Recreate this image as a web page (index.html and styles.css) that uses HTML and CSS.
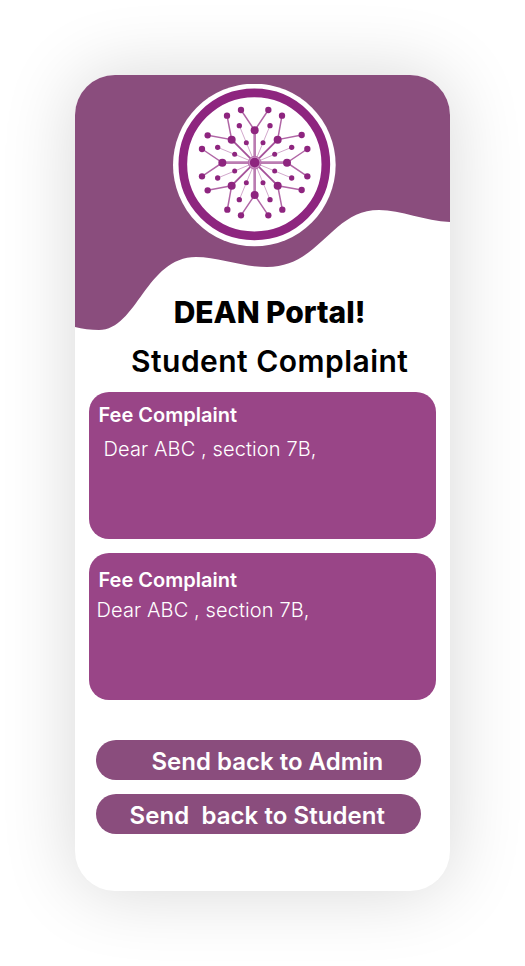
FILE: index.html
```html
<!DOCTYPE html>
<html lang="en">
<head>
<meta charset="utf-8">
<title>DEAN Portal</title>
<link rel="stylesheet" href="styles.css">
</head>
<body>
<main class="phone">
  <svg class="wave" viewBox="0 0 375 256" aria-hidden="true">
    <path d="M0 0H375V147C350 146 326 135 304 135C256 135 245 192 192 192C167 192 144 182 121 182C71 182 62 255 24 255C16 255 7 254 0 252Z"/>
  </svg>
  <header class="header">
    <svg class="logo" viewBox="24 27 489 489" role="img" aria-label="Logo">
      <defs>
        <g id="spoke">
          <path class="stem" d="M269 263V166"/>
          <path class="twig" d="M228 105L269 166L310 105"/>
          <circle cx="269" cy="166" r="12"/>
          <circle cx="228" cy="105" r="9.5"/>
          <circle cx="310" cy="105" r="9.5"/>
        </g>
        <g id="corner">
          <path class="branch" d="M269 263L338 194"/>
          <path class="twig" d="M351 122L338 194L410 180"/>
          <path class="fine" d="M269 263L294 203L315 152M269 263L329 238L380 217"/>
          <circle cx="338" cy="194" r="12"/>
          <circle cx="351" cy="122" r="9.5"/>
          <circle cx="410" cy="180" r="9.5"/>
          <circle cx="294" cy="203" r="7.5"/>
          <circle cx="315" cy="152" r="8"/>
          <circle cx="329" cy="238" r="7.5"/>
          <circle cx="380" cy="217" r="8"/>
        </g>
      </defs>
      <circle class="disc" cx="268" cy="270" r="244"/>
      <circle class="ring" cx="268" cy="268" r="214.5"/>
      <use href="#spoke"/>
      <use href="#spoke" transform="rotate(90 269 263)"/>
      <use href="#spoke" transform="rotate(180 269 263)"/>
      <use href="#spoke" transform="rotate(270 269 263)"/>
      <use href="#corner"/>
      <use href="#corner" transform="rotate(90 269 263)"/>
      <use href="#corner" transform="rotate(180 269 263)"/>
      <use href="#corner" transform="rotate(270 269 263)"/>
      <circle class="halo" cx="269" cy="263" r="19"/>
      <circle cx="269" cy="263" r="14.5"/>
    </svg>
    <h1 class="title">DEAN Portal!</h1>
    <h2 class="subtitle">Student Complaint</h2>
  </header>
  <section class="complaints">
    <article class="card">
      <h3 class="card-title">Fee Complaint</h3>
      <p class="card-text">Dear ABC , section 7B,</p>
    </article>
    <article class="card card-second">
      <h3 class="card-title">Fee Complaint</h3>
      <p class="card-text">Dear ABC , section 7B,</p>
    </article>
  </section>
  <div class="actions">
    <button class="button button-admin">Send back to Admin</button>
    <button class="button button-student">Send&nbsp; back to Student</button>
  </div>
</main>
</body>
</html>
```
FILE: styles.css
```css
* { box-sizing: border-box; }
body {
  margin: 0;
  height: 966px;
  padding: 75px;
  background: #fff;
  font-family: Inter, sans-serif;
  overflow: hidden;
}
.phone {
  position: relative;
  width: 375px;
  height: 816px;
  border-radius: 40px;
  background: #fff;
  box-shadow: 0 0 75px rgba(0, 0, 0, .16);
}
.wave {
  position: absolute;
  top: 0;
  left: 0;
  width: 375px;
  height: 256px;
  border-radius: 40px 40px 0 0;
  fill: #8a4d7d;
}
.header {
  position: relative;
  height: 317px;
  padding-top: 9px;
}
.logo {
  display: block;
  width: 163px;
  height: 163px;
  margin-left: 98px;
  fill: #8e257f;
}
.disc { fill: #fff; }
.ring { fill: none; stroke: #8e257f; stroke-width: 26; }
.stem, .branch, .twig, .fine { fill: none; stroke: #8e257f; }
.stem { stroke-width: 8; opacity: .6; }
.branch { stroke-width: 5.5; opacity: .8; }
.twig { stroke-width: 4.5; opacity: .7; }
.fine { stroke-width: 3; opacity: .4; }
.halo { fill: #ca93c3; stroke: #b76dac; stroke-width: 3; }
.title, .subtitle, .card-title, .card-text { margin: 0; white-space: nowrap; }
.title {
  margin: 47px 0 0 98.7px;
  font-size: 30px;
  line-height: 36px;
  font-weight: 800;
  letter-spacing: -.04px;
}
.subtitle {
  margin: 13px 0 0 56px;
  font-size: 30px;
  line-height: 36px;
  font-weight: 600;
  letter-spacing: .47px;
}
.complaints {
  display: flex;
  flex-direction: column;
  gap: 14px;
  padding: 0 14px;
}
.card {
  height: 147px;
  padding: 11px 9.5px;
  border-radius: 20px;
  background: #994587;
  color: #fff;
}
.card-title { font-size: 20px; line-height: 24px; font-weight: 600; }
.card-text {
  margin: 10px 0 0 5px;
  font-size: 20px;
  line-height: 24px;
  font-weight: 300;
  letter-spacing: .11px;
}
.card-second { padding-top: 15px; }
.card-second .card-text { margin: 6px 0 0 -2px; }
.actions {
  display: flex;
  flex-direction: column;
  gap: 14px;
  width: 325px;
  margin: 40px 0 0 21px;
}
.button {
  height: 40px;
  padding: 3px 0 0;
  border: 0;
  border-radius: 20px;
  background: #8a4d7d;
  color: #fff;
  font: 600 24px/29px Inter, sans-serif;
  text-align: left;
  white-space: nowrap;
}
.button-admin { padding-left: 55.5px; }
.button-student { padding-left: 33.5px; letter-spacing: .06px; }
```
